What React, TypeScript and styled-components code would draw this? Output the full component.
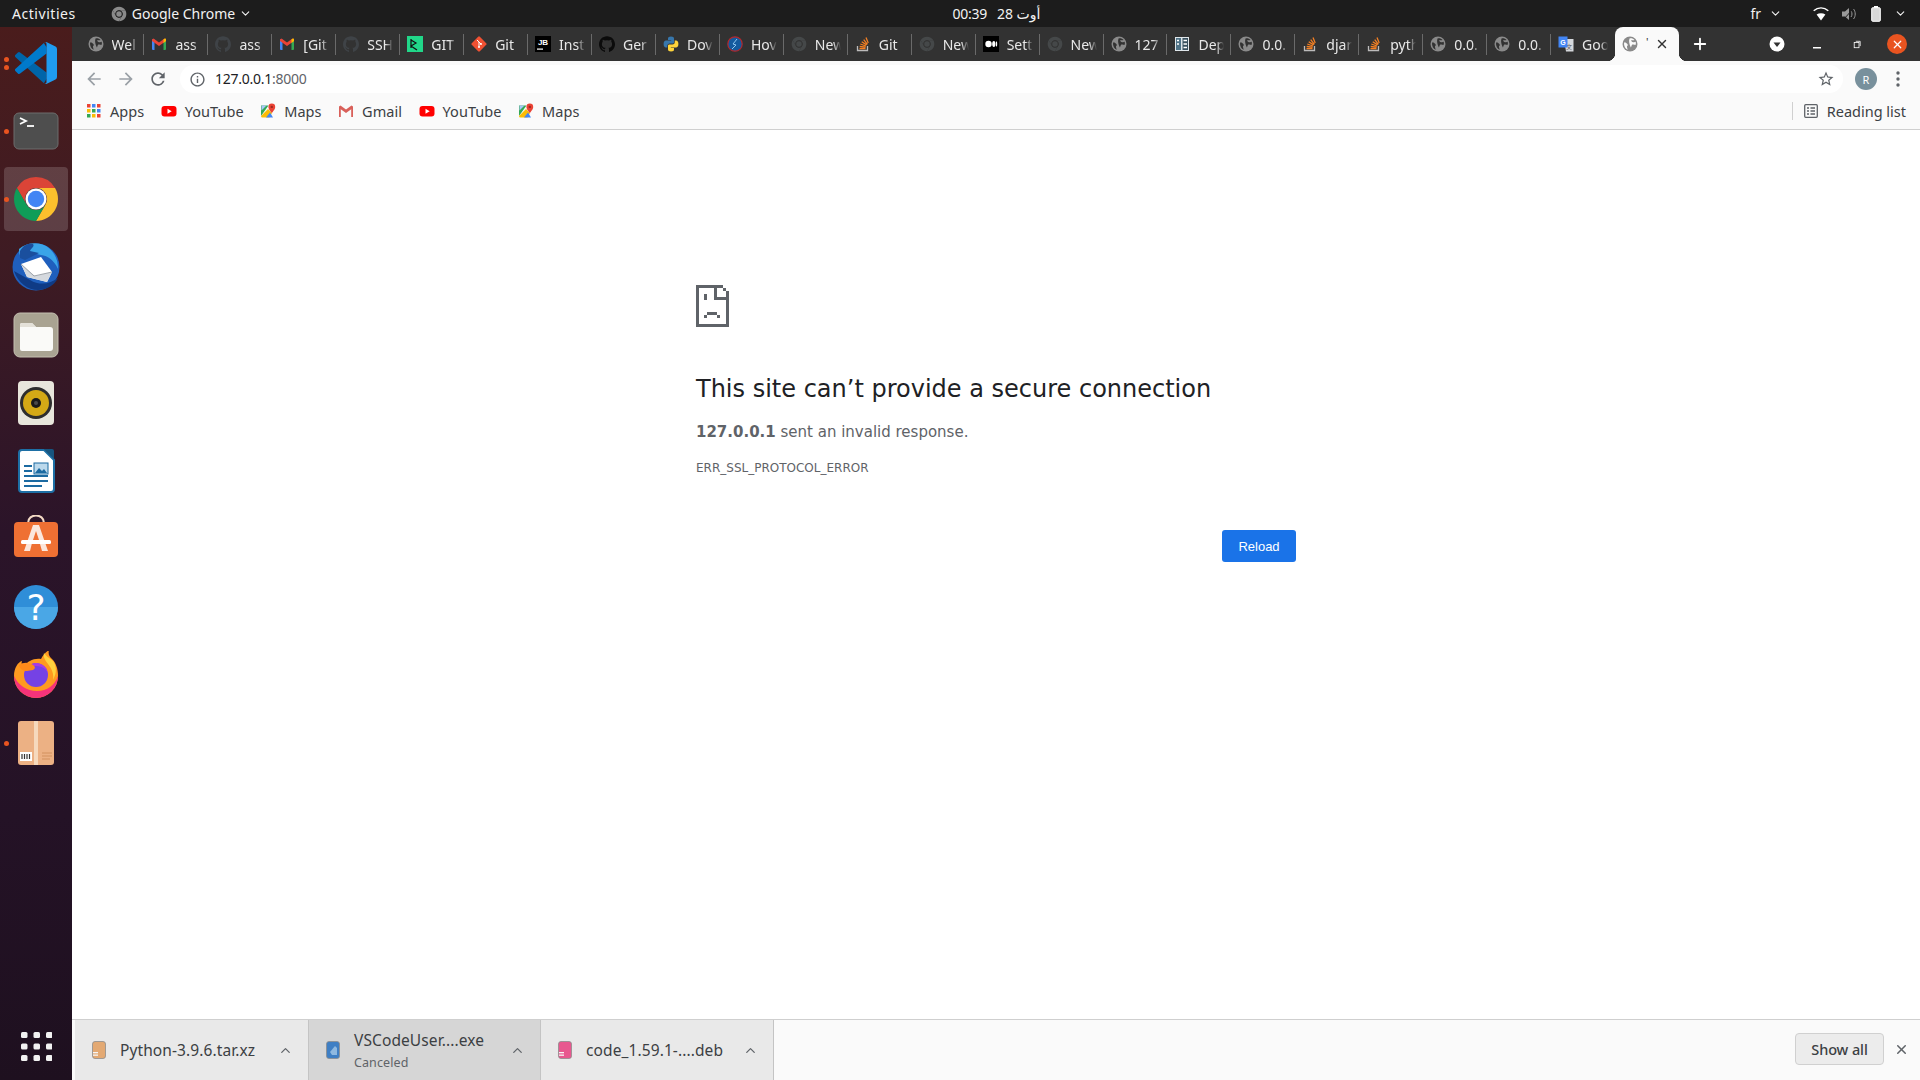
import React from 'react'
import styled, { createGlobalStyle } from 'styled-components'
import { ChevronDown, ChevronUp, Plus, X } from 'lucide-react'

const Global = createGlobalStyle`
  html, body {
    margin: 0;
    padding: 0;
    background: #fff;
    overflow: hidden;
  }
`

const UI_FONT = `"Noto Sans", "Open Sans", sans-serif`

const Desktop = styled.div`
  width: 1920px;
  height: 1080px;
  display: flex;
  flex-direction: column;
  overflow: hidden;
  font-family: ${UI_FONT};
`

/* gnome top bar */
const TopBar = styled.div`
  flex: 0 0 27px;
  display: grid;
  grid-template-columns: 1fr auto 1fr;
  align-items: center;
  background: #1c1c1c;
  color: #f2f2f2;
  font-size: 14px;
  padding: 0 13px 0 12px;
`

const TopLeft = styled.div`
  display: flex;
  align-items: center;
`

const Activities = styled.span`
  margin-right: 35px;
  letter-spacing: 0.55px;
`

const AppName = styled.span`
  margin: 0 4px 0 5px;
`

const Clock = styled.div`
  display: flex;
  gap: 10px;
  margin-left: 74px;
  font-family: "Noto Sans", "DejaVu Sans", sans-serif;
  font-size: 14px;
  letter-spacing: -0.3px;
`

const TopRight = styled.div`
  display: flex;
  align-items: center;
  justify-content: flex-end;
  gap: 6px;
`

const Lang = styled.span`
  margin-right: 2px;
`

const Tray = styled.div`
  display: flex;
  align-items: center;
  gap: 13px;
  margin-left: 25px;
`

const Body = styled.div`
  flex: 1;
  display: flex;
  min-height: 0;
`

/* ubuntu dock */
const Dock = styled.div`
  flex: 0 0 72px;
  display: flex;
  flex-direction: column;
  padding-top: 2px;
  box-sizing: border-box;
  background: linear-gradient(180deg, #4a1c1c 0%, #3e1b23 22%, #2b1429 48%, #241226 75%, #1e101f 100%);
`

const DockItem = styled.div<{ $active?: boolean; $bottom?: boolean }>`
  position: relative;
  flex: 0 0 68px;
  display: flex;
  align-items: center;
  justify-content: center;
  margin-top: ${p => (p.$bottom ? 'auto' : '0')};

  &::before {
    content: '';
    position: absolute;
    left: 4px;
    right: 4px;
    top: 2px;
    bottom: 2px;
    border-radius: 4px;
    background: ${p => (p.$active ? 'rgba(255, 255, 255, 0.16)' : 'transparent')};
  }

  svg {
    position: relative;
  }
`

const RunDots = styled.div`
  position: absolute;
  left: 4px;
  top: 0;
  bottom: 0;
  display: flex;
  flex-direction: column;
  justify-content: center;
  gap: 3px;
`

const RunDot = styled.i`
  display: block;
  width: 5px;
  height: 5px;
  border-radius: 50%;
  background: #e95420;
`

const Browser = styled.div`
  flex: 1;
  display: flex;
  flex-direction: column;
  min-width: 0;
`

/* tab strip */
const TabStrip = styled.div`
  flex: 0 0 34px;
  display: flex;
  align-items: stretch;
  background: #323232;
  padding-left: 8.5px;
  color: #e8e8e8;
  font-size: 14px;
`

const Tab = styled.div`
  flex: 0 0 63.95px;
  display: flex;
  align-items: center;
`

const TabBody = styled.div<{ $last?: boolean }>`
  flex: 1;
  height: 21px;
  display: flex;
  align-items: center;
  gap: 8px;
  padding-left: 7px;
  border-right: 1px solid ${p => (p.$last ? 'transparent' : '#6a6a6a')};
  overflow: hidden;
`

const TabTitle = styled.span`
  width: 26px;
  overflow: hidden;
  white-space: nowrap;
  -webkit-mask-image: linear-gradient(90deg, #000 70%, transparent 100%);
  mask-image: linear-gradient(90deg, #000 70%, transparent 100%);
`

const ActiveTab = styled.div`
  position: relative;
  flex: 0 0 64px;
  display: flex;
  align-items: center;
  gap: 5px;
  padding-left: 7px;
  box-sizing: border-box;
  background: #fafafa;
  border-radius: 8px 8px 0 0;
  color: #333;

  &::before,
  &::after {
    content: '';
    position: absolute;
    bottom: 0;
    width: 8px;
    height: 8px;
  }
  &::before {
    left: -8px;
    background: radial-gradient(circle at 0 0, transparent 8px, #fafafa 8.5px);
  }
  &::after {
    right: -8px;
    background: radial-gradient(circle at 100% 0, transparent 8px, #fafafa 8.5px);
  }
`

const ActiveTick = styled.span`
  width: 4px;
  margin: -6px 0 0 3px;
  font-size: 11px;
  line-height: 1;
`

const StripRight = styled.div`
  flex: 1;
  display: flex;
  align-items: center;
  padding-left: 12px;
`

const WinControls = styled.div`
  margin-left: auto;
  display: flex;
  align-items: center;
  padding-right: 3px;
`

const WinButton = styled.div`
  width: 40px;
  display: flex;
  align-items: center;
  justify-content: center;
`

const CloseCircle = styled.div`
  width: 20px;
  height: 20px;
  border-radius: 50%;
  background: #e95420;
  display: flex;
  align-items: center;
  justify-content: center;
  color: #fff;
`

/* toolbar */
const Toolbar = styled.div`
  flex: 0 0 33px;
  display: flex;
  align-items: flex-start;
  box-sizing: border-box;
  padding: 4px 0 0 12px;
  background: #fafafa;
`

const NavIcons = styled.div`
  display: flex;
  align-items: center;
  gap: 12px;
  height: 28px;
`

const Omnibox = styled.div`
  flex: 1;
  box-sizing: border-box;
  margin: 0 12px;
  height: 28px;
  border-radius: 14px;
  background: #fff;
  display: flex;
  align-items: center;
  padding: 0 8px 0 9px;
  font-size: 14px;
  letter-spacing: -0.25px;
`

const Host = styled.span`
  margin: -1px 0 0 9px;
  color: #202124;
`

const Port = styled.span`
  margin-top: -1px;
  color: #5f6368;
`

const OmniEnd = styled.div`
  margin-left: auto;
  display: flex;
`

const Avatar = styled.div`
  width: 22px;
  height: 22px;
  border-radius: 50%;
  background: #78909c;
  color: #fff;
  font-size: 11px;
  display: flex;
  align-items: center;
  justify-content: center;
`

const ToolEnd = styled.div`
  display: flex;
  align-items: center;
  gap: 19px;
  height: 28px;
  padding-right: 20px;
`

/* bookmarks */
const Bookmarks = styled.div`
  flex: 0 0 36px;
  box-sizing: border-box;
  display: flex;
  align-items: center;
  padding: 0 14px 1px 15px;
  background: #fafafa;
  border-bottom: 1px solid #cfcfcf;
  color: #3c4043;
  font-size: 14.5px;
  letter-spacing: 0.05px;
`

const Bookmark = styled.div`
  display: flex;
  align-items: center;
  gap: 8px;
  margin-right: 16.5px;
`

const ReadingList = styled.div`
  margin-left: auto;
  display: flex;
  align-items: center;
  gap: 9px;
  height: 18px;
  padding-left: 11px;
  border-left: 1px solid #d0d0d0;
  letter-spacing: 0;
`

/* page */
const Page = styled.main`
  flex: 1;
  background: #fff;
  padding: 155px 0 0 624px;
  font-family: "DejaVu Sans", sans-serif;
`

const Card = styled.div`
  width: 600px;
  display: flex;
  flex-direction: column;
`

const Heading = styled.h1`
  margin: 46px 0 0;
  font-size: 24px;
  line-height: 32px;
  font-weight: 400;
  color: #202124;
`

const Summary = styled.p`
  margin: 17px 0 0;
  font-size: 15px;
  line-height: 20px;
  color: #5f6368;

  strong {
    font-weight: 700;
  }
`

const ErrorCode = styled.div`
  margin-top: 18px;
  font-size: 12px;
  line-height: 16px;
  color: #5f6368;
`

const Reload = styled.button`
  align-self: flex-end;
  width: 74px;
  height: 32px;
  margin-top: 54px;
  border: 0;
  border-radius: 3px;
  background: #1a73e8;
  color: #fff;
  font-family: "Liberation Sans", Arial, sans-serif;
  font-size: 13px;
`

/* download shelf */
const Shelf = styled.div`
  flex: 0 0 61px;
  box-sizing: border-box;
  display: flex;
  align-items: stretch;
  background: #fafafa;
  border-top: 1px solid #cfcfcf;
  padding-left: 3px;
  color: #3c4043;
  font-size: 15.5px;
  letter-spacing: 0.1px;
`

const DownloadItem = styled.div<{ $width: number; $hover?: boolean }>`
  flex: 0 0 ${p => p.$width}px;
  box-sizing: border-box;
  display: flex;
  align-items: center;
  padding: 0 15px 0 17px;
  background: ${p => (p.$hover ? '#d6d6d6' : '#e9e9e9')};
  border-right: 1px solid #c4c4c4;
`

const FileText = styled.div`
  flex: 1;
  margin-left: 14px;
  white-space: nowrap;
`

const FileSub = styled.div`
  margin-top: 3px;
  font-size: 12.5px;
  color: #5f6368;
`

const ShelfEnd = styled.div`
  margin-left: auto;
  display: flex;
  align-items: center;
  gap: 10px;
  padding: 0 11px 2px 0;
`

const ShowAll = styled.button`
  width: 89px;
  height: 32px;
  border: 1px solid #d0d0d0;
  border-radius: 4px;
  background: #ececec;
  color: #3c4043;
  font-family: ${UI_FONT};
  font-size: 14.5px;
  font-weight: 500;
  letter-spacing: -0.1px;
`

/* ---- drawings ---- */

const Mat = ({ d, size = 18, color = '#5f6368' }: { d: string; size?: number; color?: string }) => (
  <svg width={size} height={size} viewBox="0 0 24 24" fill={color}>
    <path d={d} />
  </svg>
)

const ARROW_BACK = 'M20 11H7.83l5.59-5.59L12 4l-8 8 8 8 1.41-1.41L7.83 13H20v-2z'
const ARROW_FWD = 'M12 4l-1.41 1.41L16.17 11H4v2h12.17l-5.58 5.59L12 20l8-8z'
const RELOAD =
  'M17.65 6.35A7.958 7.958 0 0 0 12 4c-4.42 0-7.99 3.58-7.99 8s3.57 8 7.99 8c3.73 0 6.84-2.55 7.73-6h-2.08A5.99 5.99 0 0 1 12 18c-3.31 0-6-2.69-6-6s2.69-6 6-6c1.66 0 3.14.69 4.22 1.78L13 11h7V4l-2.35 2.35z'
const INFO =
  'M11 7h2v2h-2zm0 4h2v6h-2zm1-9C6.48 2 2 6.48 2 12s4.48 10 10 10 10-4.48 10-10S17.52 2 12 2zm0 18c-4.41 0-8-3.59-8-8s3.59-8 8-8 8 3.59 8 8-3.59 8-8 8z'
const STAR =
  'M22 9.24l-7.19-.62L12 2 9.19 8.63 2 9.24l5.46 4.73L5.82 21 12 17.27 18.18 21l-1.63-7.03L22 9.24zM12 15.4l-3.76 2.27 1-4.28-3.32-2.88 4.38-.38L12 6.1l1.71 4.04 4.38.38-3.32 2.88 1 4.28L12 15.4z'
const GITHUB =
  'M12 .5C5.37.5 0 5.87 0 12.5c0 5.3 3.44 9.8 8.2 11.39.6.11.82-.26.82-.58v-2.03c-3.34.73-4.04-1.61-4.04-1.61-.55-1.39-1.33-1.76-1.33-1.76-1.09-.74.08-.73.08-.73 1.2.09 1.84 1.24 1.84 1.24 1.07 1.83 2.81 1.3 3.49 1 .11-.78.42-1.31.76-1.61-2.67-.3-5.47-1.33-5.47-5.93 0-1.31.47-2.38 1.24-3.22-.14-.3-.54-1.52.1-3.18 0 0 1.01-.32 3.3 1.23a11.5 11.5 0 0 1 6 0c2.28-1.55 3.29-1.23 3.29-1.23.64 1.66.24 2.88.12 3.18a4.65 4.65 0 0 1 1.23 3.22c0 4.61-2.81 5.62-5.48 5.92.42.36.81 1.1.81 2.22v3.29c0 .32.22.7.83.58C20.57 22.29 24 17.8 24 12.5 24 5.87 18.63.5 12 .5z'

const ChromeLogo = ({ size = 16, tone, hole }: { size?: number; tone?: string; hole?: string }) => (
  <svg width={size} height={size} viewBox="0 0 48 48">
    <path fill={tone || '#db4437'} d="M24 2a22 22 0 0 1 19.05 11H24a11 11 0 0 0-9.53 16.5L4.95 13A22 22 0 0 1 24 2z" />
    <path fill={tone || '#fbc02d'} d="M43.05 13A22 22 0 0 1 24 46l9.53-16.5A11 11 0 0 0 24 13z" />
    <path fill={tone || '#0f9d58'} d="M4.95 13l9.52 16.5a11 11 0 0 0 19.06 0L24 46A22 22 0 0 1 4.95 13z" />
    <circle cx="24" cy="24" r="10.5" fill={hole || '#fff'} />
    <circle cx="24" cy="24" r="8.2" fill={tone || '#4285f4'} />
  </svg>
)

const Globe = ({ hole = '#323232', size = 16 }: { hole?: string; size?: number }) => (
  <svg width={size} height={size} viewBox="0 0 16 16">
    <circle cx="8" cy="8" r="7.5" fill="#8a8a8a" />
    <path fill={hole} d="M2 6.5c1.5-.4 2.5.4 3.4 1.5.7.9.4 1.6-.3 2.1-.3.8.1 2.2.6 3.6C3.400 12.900 1.700 10.200 2 6.500zM7.500 2.500c1.900-.5 3.900.2 5 1.400-1 .6-2 .4-2.900.2-.7.7-.1 1.400.7 1.800 1.500.6 2.600.4 3.400-.1.300 1.100.300 2.200-.2 3.300-1-.6-2.100-.9-3.200-.5-.9.800-.8 2.200-1.400 3-.5-1-.7-2-1.100-2.700C7.500 8 6.500 5 7.500 2.500z" />
  </svg>
)

const GmailIcon = ({ flat }: { flat?: boolean }) => (
  <svg width="16" height="16" viewBox="0 0 16 16">
    <path fill="#4285f4" d="M1 3.500h2.500V14H2a1 1 0 0 1-1-1z" opacity={flat ? 0 : 1} />
    <path fill="#34a853" d="M12.500 3.500H15V13a1 1 0 0 1-1 1h-1.500z" opacity={flat ? 0 : 1} />
    <path fill={flat ? '#d9605a' : '#ea4335'} d="M1 3.500 2.500 2.500 8 6.600l5.500-4.100 1.500 1V5L8 10 1 5z" />
    {flat && <path fill="#d9605a" d="M1 4h1.800v10H1zM13.200 4H15v10h-1.800z" />}
    {!flat && <path fill="#fbbc04" d="M12.500 6.900 15 5V3.500a1 1 0 0 0-1.600-.8l-.9.700z" />}
  </svg>
)

const YouTubeIcon = () => (
  <svg width="16" height="16" viewBox="0 0 16 16">
    <rect x="0.500" y="3" width="15" height="10.500" rx="3" fill="#f00" />
    <path fill="#fff" d="M6.500 5.800v5l4.200-2.500z" />
  </svg>
)

const MapsIcon = () => (
  <svg width="16" height="16" viewBox="0 0 16 16">
    <path fill="#34a853" d="M1 2.500h7.500L1 13z" />
    <path fill="#fbbc04" d="M1 13l7-7 4 4-2.500 4.500H2.500A1.500 1.500 0 0 1 1 13z" />
    <path fill="#4285f4" d="M6 14.500l4-5 3 5z" />
    <path fill="#a8c7fa" d="M1.500 2.500h5L1.500 7.500z" />
    <path fill="#ea4335" d="M11.800.5a3.400 3.400 0 0 0-3.400 3.400c0 2.300 3.400 6 3.400 6s3.400-3.700 3.400-6A3.400 3.400 0 0 0 11.800.5z" />
    <circle cx="11.800" cy="3.900" r="1.200" fill="#9e2a22" />
  </svg>
)

const AppsIcon = () => (
  <svg width="15" height="14" viewBox="0 0 15 14">
    {['#ea4335', '#4285f4', '#ea4335', '#fbbc04', '#34a853', '#4285f4', '#34a853', '#fbbc04', '#ea4335'].map((c, i) => (
      <rect key={i} x={(i % 3) * 5} y={Math.floor(i / 3) * 5} width="3.500" height="3.500" fill={c} />
    ))}
  </svg>
)

const Favicon = ({ kind }: { kind: string }) => {
  switch (kind) {
    case 'gmail':
      return <GmailIcon />
    case 'ghdark':
      return <Mat d={GITHUB} size={16} color="#3f4347" />
    case 'gh':
      return <Mat d={GITHUB} size={16} color="#0b0b0b" />
    case 'pycharm':
      return (
        <svg width="16" height="16" viewBox="0 0 16 16">
          <rect width="16" height="16" fill="#21d789" />
          <path d="M4 3v9M4 4l5 3-5 3 6 4" stroke="#111" fill="none" strokeWidth="1.200" />
        </svg>
      )
    case 'git':
      return (
        <svg width="16" height="16" viewBox="0 0 16 16">
          <rect x="2.300" y="2.300" width="11.400" height="11.400" rx="1.200" fill="#f05133" transform="rotate(45 8 8)" />
          <path d="M6 4l4 4M8 6v5" stroke="#fff" strokeWidth="1" />
          <circle cx="8" cy="11" r="1" fill="#fff" />
          <circle cx="10" cy="8" r="1" fill="#fff" />
        </svg>
      )
    case 'jb':
      return (
        <svg width="16" height="16" viewBox="0 0 16 16">
          <rect width="16" height="16" fill="#000" />
          <text x="8" y="9" textAnchor="middle" fontFamily="Liberation Sans" fontWeight="700" fontSize="8" fill="#fff">
            JB
          </text>
          <rect x="2" y="12.500" width="6" height="1.200" fill="#fff" />
        </svg>
      )
    case 'python':
      return (
        <svg width="16" height="16" viewBox="0 0 16 16">
          <path fill="#3776ab" d="M8 .5C5.500.5 5 1.500 5 2.500V4h3.200v.6H3C1.500 4.600.6 5.800.6 8S1.500 11.400 3 11.400h1.300V9.800C4.300 8.500 5.300 7.500 6.600 7.500h3C10.500 7.500 11 7 11 6V2.500C11 1.300 10 .5 8 .5z" />
          <path fill="#ffd43b" d="M8 15.500c2.500 0 3-1 3-2V12H7.800v-.6H13c1.500 0 2.400-1.200 2.400-3.400S14.500 4.600 13 4.600h-1.300v1.600c0 1.300-1 2.300-2.300 2.300h-3C5.500 8.500 5 9 5 10v3.500c0 1.200 1 2 3 2z" />
        </svg>
      )
    case 'how':
      return (
        <svg width="16" height="16" viewBox="0 0 16 16">
          <circle cx="8" cy="8" r="7.200" fill="#145a9e" stroke="#b3282d" strokeWidth="1.200" />
          <path d="M10 3 6 8l3 1-4 4" stroke="#8ec6ef" fill="none" strokeWidth="1" />
        </svg>
      )
    case 'chrome':
      return <ChromeLogo tone="#454849" hole="#323232" />
    case 'so':
      return (
        <svg width="16" height="16" viewBox="0 0 16 16" stroke="#f48024" strokeWidth="1.300" fill="none">
          <path stroke="#bcbbbb" d="M2.500 10v4.500h10V10" />
          <path d="M4.500 12.500h6M4.700 10.300l5.900.8M5.300 8l5.600 2M6.700 5.700l4.900 3.200M8.700 3.700l3.700 4.600M11 1.500l2.200 5.400" />
        </svg>
      )
    case 'medium':
      return (
        <svg width="16" height="16" viewBox="0 0 16 16">
          <rect width="16" height="16" fill="#000" />
          <ellipse cx="5.500" cy="8" rx="3.200" ry="3.200" fill="#fff" />
          <ellipse cx="10.800" cy="8" rx="1.600" ry="3" fill="#fff" />
          <ellipse cx="13.500" cy="8" rx=".7" ry="2.700" fill="#fff" />
        </svg>
      )
    case 'dep':
      return (
        <svg width="16" height="16" viewBox="0 0 16 16">
          <rect x="1" y="1" width="14" height="14" fill="#dfe6ea" />
          <rect x="2" y="2" width="5" height="12" fill="#4f7387" />
          <rect x="8.500" y="2" width="5.500" height="12" fill="#39505e" />
          <path d="M9.500 4.500h3.500M9.500 8h3.500M9.500 11.500h3.500M3 4.500h2M3 8h2" stroke="#fff" strokeWidth="1.300" />
        </svg>
      )
    case 'translate':
      return (
        <svg width="16" height="16" viewBox="0 0 16 16">
          <path fill="#d5d8dc" d="M6 3h9.500v12.500H8z" />
          <text x="11" y="12.500" textAnchor="middle" fontSize="6" fill="#555" fontFamily="Noto Sans CJK SC">
            文
          </text>
          <rect x="0.500" y="0.500" width="9" height="11" fill="#4285f4" />
          <text x="5" y="8.500" textAnchor="middle" fontSize="7" fontWeight="700" fill="#fff" fontFamily="Liberation Sans">
            G
          </text>
        </svg>
      )
    default:
      return <Globe />
  }
}

const SadPage = () => (
  <svg width="33" height="42" viewBox="0 0 33 42" shapeRendering="crispEdges" fill="#5f6368">
    <rect x="0" y="0" width="3" height="42" />
    <rect x="0" y="39" width="33" height="3" />
    <rect x="0" y="0" width="27" height="3" />
    <rect x="30" y="12" width="3" height="30" />
    <rect x="18" y="0" width="3" height="15" />
    <rect x="18" y="12" width="15" height="3" />
    <rect x="27" y="3" width="3" height="3" />
    <rect x="30" y="6" width="3" height="6" />
    <rect x="8" y="9" width="3" height="6" />
    <rect x="11" y="27" width="10" height="3" />
    <rect x="8" y="30" width="3" height="3" />
    <rect x="21" y="30" width="3" height="3" />
  </svg>
)

const VSCodeIcon = () => (
  <svg width="42" height="42" viewBox="0 0 24 24">
    <path fill="#0065a9" d="M.33 7.260 1.650 6.060a1 1 0 0 1 1.280-.06L18 17.450V21L16.500 23.500 .33 8.740a1 1 0 0 1 0-1.480z" />
    <path fill="#007acc" d="M.33 16.740 1.650 17.940a1 1 0 0 0 1.280.06L18 6.550V3L16.500.5.33 15.260a1 1 0 0 0 0 1.480z" />
    <path fill="#1f9cf0" d="M16.500.5a1.500 1.500 0 0 1 1.710-.29l4.940 2.380A1.500 1.500 0 0 1 24 3.940v16.120a1.500 1.500 0 0 1-.85 1.350l-4.940 2.380a1.500 1.500 0 0 1-1.710-.29c.6.6 1.500.2 1.500-.6V1.100c0-.8-.9-1.200-1.500-.6z" />
  </svg>
)

const TerminalIcon = () => (
  <svg width="48" height="48" viewBox="0 0 48 48">
    <rect x="2" y="6" width="44" height="36" rx="5" fill="#4e4e4e" stroke="#6c6c6c" />
    <path d="M8 11l6 3-6 3" stroke="#fff" strokeWidth="1.800" fill="none" />
    <path d="M15 19h7" stroke="#fff" strokeWidth="1.800" />
  </svg>
)

const ThunderbirdIcon = () => (
  <svg width="50" height="50" viewBox="0 1 50 50">
    <circle cx="25" cy="26" r="23.500" fill="#1f5fbd" />
    <path fill="#0f3b86" d="M3 30c4 12 14 19 24 19 8 0 16-4 20-12-8 6-18 8-28 2z" />
    <path fill="#3aa4e8" d="M8 8c8-7 22-8 31 0 6 6 8 12 8 20-4-9-10-13-17-14l-12-3-8 5c-2-3-2-5-2-8z" />
    <path fill="#1a4f9e" d="M9 10c3-6 10-9 13-7 2 3-2 4-3 7l9 2-14 7-5-2z" />
    <path fill="#fff" d="M10 23l20-7 11 15-5 10-20-5z" />
    <path fill="#d5d9de" d="M10 23l14 12 17-4-5 10-20-5z" />
    <path fill="none" stroke="#8b9299" strokeWidth="0.800" d="M10 23l13 12 18-4" />
  </svg>
)

const FilesIcon = () => (
  <svg width="46" height="46" viewBox="0 0 46 46">
    <rect x="1" y="1" width="44" height="44" rx="6" fill="#a9a392" stroke="#c4bfb0" />
    <path fill="#fafaf8" d="M7 13a2 2 0 0 1 2-2h10l4 4h14a3 3 0 0 1 3 3v18a3 3 0 0 1-3 3H9a2 2 0 0 1-2-2z" />
    <path fill="#e4e1d9" d="M7 13a2 2 0 0 1 2-2h10l4 4H7z" />
  </svg>
)

const RhythmboxIcon = () => (
  <svg width="38" height="46" viewBox="0 0 38 46">
    <rect x="1" y="1" width="36" height="44" rx="4" fill="#e8e6dc" />
    <circle cx="19" cy="23" r="16" fill="#2e2e2e" />
    <circle cx="19" cy="23" r="13" fill="#d4a916" />
    <circle cx="19" cy="23" r="5" fill="#1a1a1a" />
    <circle cx="19" cy="23" r="2" fill="#4a4a4a" />
  </svg>
)

const WriterIcon = () => (
  <svg width="38" height="46" viewBox="0 0 38 46">
    <path fill="#fff" stroke="#1d6fa5" strokeWidth="2" d="M2 5a3 3 0 0 1 3-3h22l10 10v29a3 3 0 0 1-3 3H5a3 3 0 0 1-3-3z" />
    <path fill="#17557f" d="M27 1l10 10V3a2 2 0 0 0-2-2z" />
    <path d="M7 18h8M7 23h8M7 28h24M7 33h24M7 38h18" stroke="#1b6aa1" strokeWidth="2" />
    <rect x="17" y="15" width="14" height="11" fill="#bcd9ec" stroke="#1b6aa1" />
    <path fill="#1b6aa1" d="M18 25l4-5 3 3 2-2 3 4z" />
  </svg>
)

const StoreIcon = () => (
  <svg width="46" height="48" viewBox="0 0 46 48">
    <path d="M15 8c0-10 16-10 16 0" fill="none" stroke="#f3d9c4" strokeWidth="2" />
    <rect x="1" y="7" width="44" height="35" rx="4" fill="#ef7033" />
    <path fill="#fbe6dc" d="M20 10h6l9 26h-6l-2-7-8-1-2 8h-6z" />
    <path fill="#ef7033" d="M23 16l-3 9h6z" />
    <rect x="8" y="25" width="30" height="4" rx="1.500" fill="#fff" />
  </svg>
)

const HelpIcon = () => (
  <svg width="46" height="46" viewBox="0 0 46 46">
    <circle cx="23" cy="23" r="22" fill="#2f8ed8" />
    <path fill="#4aa7e6" d="M1 23h44a22 22 0 0 1-44 0z" />
    <text x="23" y="36" textAnchor="middle" fontFamily="DejaVu Sans" fontSize="36" fill="#fff">
      ?
    </text>
  </svg>
)

const FirefoxIcon = () => (
  <svg width="46" height="48" viewBox="0 2 46 48">
    <path fill="#ff9a1f" d="M1 27C1 19 5 13 9 12c-1 3 0 5 2 6 3-6 10-9 17-8 2-4 5-7 8-9-1 4 0 6 3 9 4 4 6 10 6 17a22 22 0 0 1-44 0z" />
    <path fill="#f5337a" d="M1 27a22 22 0 0 0 44 0c-3 9-11 15-21 15S5 36 1 27z" />
    <path fill="#ffd23e" d="M31 4c-1 4 1 7 4 11 4 5 6 10 5 16 4-7 4-15-1-20-3-2-6-4-8-7z" />
    <circle cx="23" cy="26" r="12" fill="#7542e5" />
    <path fill="#a93ce3" d="M23 14a12 12 0 0 1 12 12c0-5-5-9-12-9-4 0-8 2-10 4a12 12 0 0 1 10-7z" />
    <path fill="#ff8a1a" d="M6 16c4-3 10-3 14 0 3 2 2 4 0 5l-6 1c-4 0-7-2-8-6z" />
  </svg>
)

const PackageIcon = () => (
  <svg width="38" height="46" viewBox="0 0 38 46">
    <rect x="1" y="1" width="36" height="44" rx="3" fill="#ecb184" />
    <rect x="17" y="1" width="4" height="44" fill="#f6d9bd" />
    <rect x="3" y="32" width="12" height="9" fill="#fff" />
    <path d="M5 34v5M7.500 34v5M10 34v5M12.500 34v5" stroke="#333" strokeWidth="1.200" />
    <path d="M25 33h10M25 36h10M25 39h8" stroke="#d2915f" />
  </svg>
)

const GridIcon = () => (
  <svg width="32" height="30" viewBox="0 0 32 30" fill="#f2f2f2">
    {[0, 1, 2, 3, 4, 5, 6, 7, 8].map(i => (
      <rect key={i} x={(i % 3) * 12.500 + 1} y={Math.floor(i / 3) * 11.500 + 1} width="6.500" height="6" rx="1.500" />
    ))}
  </svg>
)

const ArchiveIcon = ({ color, band }: { color: string; band: string }) => (
  <svg width="14" height="18" viewBox="0 0 14 18">
    <rect x="0.500" y="0.500" width="13" height="17" rx="2.500" fill={color} stroke="#8d8d8d" strokeWidth="0.800" />
    <rect x="1" y="11" width="5" height="1.300" fill={band} />
    <rect x="1" y="13.500" width="5" height="1.300" fill={band} />
  </svg>
)

const TABS: [string, string][] = [
  ['globe', 'Wel'],
  ['gmail', 'ass'],
  ['ghdark', 'ass'],
  ['gmail', '[Git'],
  ['ghdark', 'SSH'],
  ['pycharm', 'GIT'],
  ['git', 'Git'],
  ['jb', 'Inst'],
  ['gh', 'Ger'],
  ['python', 'Dov'],
  ['how', 'Hov'],
  ['chrome', 'New'],
  ['so', 'Git'],
  ['chrome', 'New'],
  ['medium', 'Sett'],
  ['chrome', 'New'],
  ['globe', '127'],
  ['dep', 'Dep'],
  ['globe', '0.0.'],
  ['so', 'djar'],
  ['so', 'pyth'],
  ['globe', '0.0.'],
  ['globe', '0.0.'],
  ['translate', 'Goo'],
]

const DOCK: { icon: React.ReactNode; dots?: number; active?: boolean }[] = [
  { icon: <VSCodeIcon />, dots: 2 },
  { icon: <TerminalIcon />, dots: 1 },
  { icon: <ChromeLogo size={48} />, dots: 1, active: true },
  { icon: <ThunderbirdIcon /> },
  { icon: <FilesIcon /> },
  { icon: <RhythmboxIcon /> },
  { icon: <WriterIcon /> },
  { icon: <StoreIcon /> },
  { icon: <HelpIcon /> },
  { icon: <FirefoxIcon /> },
  { icon: <PackageIcon />, dots: 1 },
]

const BOOKMARKS: { icon: React.ReactNode; label: string }[] = [
  { icon: <AppsIcon />, label: 'Apps' },
  { icon: <YouTubeIcon />, label: 'YouTube' },
  { icon: <MapsIcon />, label: 'Maps' },
  { icon: <GmailIcon flat />, label: 'Gmail' },
  { icon: <YouTubeIcon />, label: 'YouTube' },
  { icon: <MapsIcon />, label: 'Maps' },
]

const App: React.FC = () => (
  <Desktop>
    <Global />
    <TopBar>
      <TopLeft>
        <Activities>Activities</Activities>
        <ChromeLogo size={16} tone="#8a8a8a" hole="#1c1c1c" />
        <AppName>Google Chrome</AppName>
        <ChevronDown size={13} />
      </TopLeft>
      <Clock>
        <span>00:39</span>
        <span>28 أوت</span>
      </Clock>
      <TopRight>
        <Lang>fr</Lang>
        <ChevronDown size={13} />
        <Tray>
          <svg width="16" height="14" viewBox="0 0 16 14" fill="#fff">
            <path d="M.7 3.800C4.900-.1 11.100-.1 15.300 3.800" fill="none" stroke="#fff" strokeWidth="1.400" />
            <path d="M3.600 7.500C6.200 5.800 9.800 5.800 12.400 7.500L8 13.500z" />
          </svg>
          <svg width="16" height="14" viewBox="0 0 16 14" fill="#9a9a9a">
            <path d="M0 4.500h3L7 1v12L3 9.500H0z" />
            <path d="M9 4c1.300 1.500 1.300 4.500 0 6M11.500 2c2.300 2.700 2.300 7.300 0 10" stroke="#9a9a9a" fill="none" />
            <path d="M1 13 12 1" stroke="#1c1c1c" strokeWidth="1" />
          </svg>
          <svg width="10" height="16" viewBox="0 0 10 16">
            <rect x="3" y="0" width="4" height="2" fill="#fff" />
            <rect x="0.700" y="1.700" width="8.600" height="13.600" rx="1" fill="#d8d8d8" stroke="#fff" />
          </svg>
          <ChevronDown size={13} />
        </Tray>
      </TopRight>
    </TopBar>
    <Body>
      <Dock>
        {DOCK.map((item, i) => (
          <DockItem key={i} $active={item.active}>
            {item.dots && (
              <RunDots>
                {Array.from({ length: item.dots }).map((_, d) => (
                  <RunDot key={d} />
                ))}
              </RunDots>
            )}
            {item.icon}
          </DockItem>
        ))}
        <DockItem $bottom>
          <GridIcon />
        </DockItem>
      </Dock>
      <Browser>
        <TabStrip>
          {TABS.map(([kind, title], i) => (
            <Tab key={i}>
              <TabBody $last={i === TABS.length - 1}>
                <Favicon kind={kind} />
                <TabTitle>{title}</TabTitle>
              </TabBody>
            </Tab>
          ))}
          <ActiveTab>
            <Globe hole="#fafafa" />
            <ActiveTick>'</ActiveTick>
            <X size={14} color="#333" strokeWidth={2.4} />
          </ActiveTab>
          <StripRight>
            <Plus size={18} color="#fff" strokeWidth={2.4} />
            <WinControls>
              <WinButton>
                <svg width="16" height="16" viewBox="0 0 16 16">
                  <circle cx="8" cy="8" r="7.500" fill="#fff" />
                  <path d="M4.500 6.500h7L8 11z" fill="#323232" />
                </svg>
              </WinButton>
              <WinButton>
                <svg width="10" height="10" viewBox="0 0 10 10">
                  <rect x="1" y="8" width="8" height="1.500" fill="#fff" />
                </svg>
              </WinButton>
              <WinButton>
                <svg width="8" height="9" viewBox="0 0 10 10" fill="none" stroke="#fff">
                  <rect x="1.500" y="2.500" width="6" height="6.500" />
                  <path d="M3.500 1h5.500v6" />
                </svg>
              </WinButton>
              <WinButton>
                <CloseCircle>
                  <X size={13} strokeWidth={2.2} />
                </CloseCircle>
              </WinButton>
            </WinControls>
          </StripRight>
        </TabStrip>
        <Toolbar>
          <NavIcons>
            <Mat d={ARROW_BACK} size={20} color="#9aa0a6" />
            <Mat d={ARROW_FWD} size={20} color="#9aa0a6" />
            <Mat d={RELOAD} size={20} color="#5f6368" />
          </NavIcons>
          <Omnibox>
            <Mat d={INFO} size={17} color="#5f6368" />
            <Host>127.0.0.1</Host>
            <Port>:8000</Port>
            <OmniEnd>
              <Mat d={STAR} size={18} color="#5f6368" />
            </OmniEnd>
          </Omnibox>
          <ToolEnd>
            <Avatar>R</Avatar>
            <svg width="4" height="16" viewBox="0 0 4 16" fill="#5f6368">
              <circle cx="2" cy="2" r="1.700" />
              <circle cx="2" cy="8" r="1.700" />
              <circle cx="2" cy="14" r="1.700" />
            </svg>
          </ToolEnd>
        </Toolbar>
        <Bookmarks>
          {BOOKMARKS.map((b, i) => (
            <Bookmark key={i}>
              {b.icon}
              <span>{b.label}</span>
            </Bookmark>
          ))}
          <ReadingList>
            <svg width="14" height="14" viewBox="0 0 14 14" fill="none" stroke="#5f6368" strokeWidth="1.300">
              <rect x="0.700" y="0.700" width="12.600" height="12.600" rx="1" />
              <path d="M3 4h2M6.500 4H11M3 7h2M6.500 7H11M3 10h2M6.500 10H11" />
            </svg>
            <span>Reading list</span>
          </ReadingList>
        </Bookmarks>
        <Page>
          <Card>
            <SadPage />
            <Heading>This site can’t provide a secure connection</Heading>
            <Summary>
              <strong>127.0.0.1</strong> sent an invalid response.
            </Summary>
            <ErrorCode>ERR_SSL_PROTOCOL_ERROR</ErrorCode>
            <Reload>Reload</Reload>
          </Card>
        </Page>
        <Shelf>
          <DownloadItem $width={234}>
            <ArchiveIcon color="#e3a973" band="#f5f5f5" />
            <FileText>Python-3.9.6.tar.xz</FileText>
            <ChevronUp size={15} color="#5f6368" />
          </DownloadItem>
          <DownloadItem $width={232} $hover>
            <svg width="14" height="18" viewBox="0 0 14 18">
              <rect x="0.500" y="0.500" width="13" height="17" rx="2.500" fill="#3f7fc4" stroke="#8d8d8d" strokeWidth="0.800" />
              <path d="M4 11l5-6 2 2v7H6z" fill="#8fb9e0" />
            </svg>
            <FileText>
              VSCodeUser....exe
              <FileSub>Canceled</FileSub>
            </FileText>
            <ChevronUp size={15} color="#5f6368" />
          </DownloadItem>
          <DownloadItem $width={233}>
            <ArchiveIcon color="#e8588f" band="#f5f5f5" />
            <FileText>code_1.59.1-....deb</FileText>
            <ChevronUp size={15} color="#5f6368" />
          </DownloadItem>
          <ShelfEnd>
            <ShowAll>Show all</ShowAll>
            <X size={15} color="#5f6368" strokeWidth={2.4} />
          </ShelfEnd>
        </Shelf>
      </Browser>
    </Body>
  </Desktop>
)

export default App
